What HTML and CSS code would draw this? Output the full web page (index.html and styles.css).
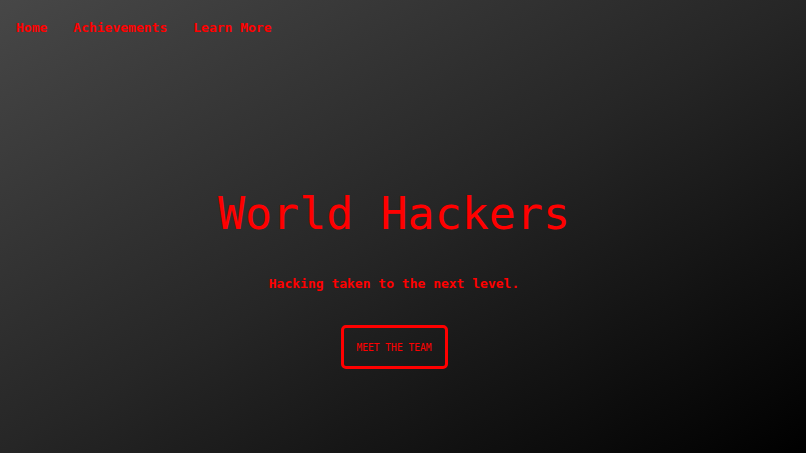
FILE: index.html
```html
<!DOCTYPE html>
<html>
<head>
<meta charset="utf-8">
<link rel="stylesheet" href="styles.css">
</head>
<body>
<div class="page">
  <nav class="nav">
    <a class="nav-link" href="#">Home</a>
    <a class="nav-link" href="#">Achievements</a>
    <a class="nav-link" href="#">Learn More</a>
  </nav>
  <main class="hero">
    <h1 class="title">World Hackers</h1>
    <p class="subtitle">Hacking taken to the next level.</p>
    <a class="btn" href="#">MEET THE TEAM</a>
  </main>
</div>
</body>
</html>
```
FILE: styles.css
```css
html, body {
  margin: 0;
  padding: 0;
  height: 100%;
}
body {
  font-family: "DejaVu Sans Mono", "Liberation Mono", monospace;
  color: #ff0000;
  background: linear-gradient(to bottom right, #474747 0%, #262626 50%, #000000 100%);
}
.page {
  height: 453px;
  display: flex;
  flex-direction: column;
}
.nav {
  display: flex;
  gap: 26px;
  padding: 20px 16px 0;
}
.nav-link {
  color: #ff0000;
  text-decoration: none;
  font-weight: bold;
  font-size: 13px;
  line-height: 16px;
}
.hero {
  display: flex;
  flex-direction: column;
  align-items: center;
  padding-right: 18px;
}
.title {
  margin: 152px 0 0;
  font-size: 45px;
  line-height: 52px;
  font-weight: normal;
}
.subtitle {
  margin: 36px 0 0;
  font-size: 13px;
  line-height: 16px;
  font-weight: bold;
}
.btn {
  margin-top: 33px;
  width: 107px;
  height: 44px;
  box-sizing: border-box;
  border: 3px solid #ff0000;
  border-radius: 5px;
  color: #ff0000;
  text-decoration: none;
  font-size: 9.6px;
  display: flex;
  align-items: center;
  justify-content: center;
}
```
